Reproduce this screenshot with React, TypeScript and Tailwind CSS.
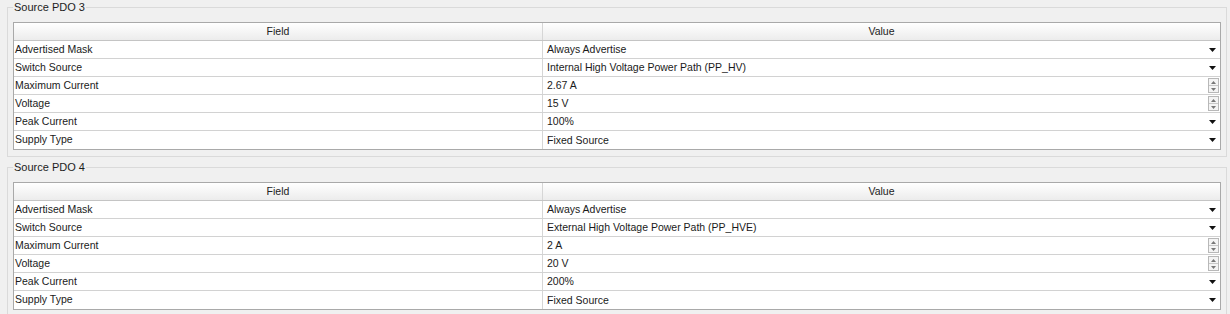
type Row = { field: string; value: string; kind: 'select' | 'spin' };

const pdo3: Row[] = [
  { field: 'Advertised Mask', value: 'Always Advertise', kind: 'select' },
  { field: 'Switch Source', value: 'Internal High Voltage Power Path (PP_HV)', kind: 'select' },
  { field: 'Maximum Current', value: '2.67 A', kind: 'spin' },
  { field: 'Voltage', value: '15 V', kind: 'spin' },
  { field: 'Peak Current', value: '100%', kind: 'select' },
  { field: 'Supply Type', value: 'Fixed Source', kind: 'select' },
];

const pdo4: Row[] = [
  { field: 'Advertised Mask', value: 'Always Advertise', kind: 'select' },
  { field: 'Switch Source', value: 'External High Voltage Power Path (PP_HVE)', kind: 'select' },
  { field: 'Maximum Current', value: '2 A', kind: 'spin' },
  { field: 'Voltage', value: '20 V', kind: 'spin' },
  { field: 'Peak Current', value: '200%', kind: 'select' },
  { field: 'Supply Type', value: 'Fixed Source', kind: 'select' },
];

function DropArrow() {
  return (
    <svg width="7" height="4" viewBox="0 0 7 4" className="mr-[3px]">
      <path d="M0 0h7L3.5 4z" fill="#111" />
    </svg>
  );
}

function Spinner() {
  return (
    <div className="flex h-[15px] w-[11px] flex-col border border-[#b8b8b8] bg-[#f4f4f4]">
      <div className="flex flex-1 items-center justify-center border-b border-[#c8c8c8]">
        <svg width="5" height="3" viewBox="0 0 5 3">
          <path d="M0 3h5L2.5 0z" fill="#777" />
        </svg>
      </div>
      <div className="flex flex-1 items-center justify-center">
        <svg width="5" height="3" viewBox="0 0 5 3">
          <path d="M0 0h5L2.5 3z" fill="#777" />
        </svg>
      </div>
    </div>
  );
}

function PdoGroup({ title, rows }: { title: string; rows: Row[] }) {
  return (
    <div className="flex flex-col">
      {/* group title with line running through */}
      <div className="flex h-[14px]">
        <div className="mt-[7px] w-[6px] border-l border-t border-[#dadada]" />
        <span className="px-[1px] text-[11px] leading-[14px] text-[#1c1c1c]">{title}</span>
        <div className="mt-[7px] flex-1 border-r border-t border-[#dadada]" />
      </div>
      <div className="border-b border-l border-r border-[#dadada] px-[5px] pb-[6px] pt-[8px]">
        <div className="border border-[#a9a9a9] bg-white">
          <div className="flex h-[18px] border-b border-[#c4c4c4] bg-gradient-to-b from-white to-[#ececec] text-[10.5px] leading-[17px] text-[#222]">
            <div className="w-[529px] border-r border-[#d6d6d6] text-center">Field</div>
            <div className="flex-1 text-center">Value</div>
          </div>
          {rows.map((r) => (
            <div key={r.field} className="flex h-[18px] border-b border-[#d2d2d2] text-[10.5px] leading-[17px] text-[#1a1a1a] last:border-b-0">
              <div className="w-[529px] border-r border-[#d6d6d6] pl-[1px]">{r.field}</div>
              <div className="flex flex-1 items-center justify-between pl-[4px] pr-[1px]">
                <span>{r.value}</span>
                {r.kind === 'select' ? <DropArrow /> : <Spinner />}
              </div>
            </div>
          ))}
        </div>
      </div>
    </div>
  );
}

export default function App() {
  return (
    <div className="flex h-[314px] w-[1230px] flex-col gap-[3px] bg-[#f0f0f0] pl-[7px] pr-[3px] font-['Liberation_Sans',Arial,sans-serif]">
      <PdoGroup title="Source PDO 3" rows={pdo3} />
      <PdoGroup title="Source PDO 4" rows={pdo4} />
    </div>
  );
}
